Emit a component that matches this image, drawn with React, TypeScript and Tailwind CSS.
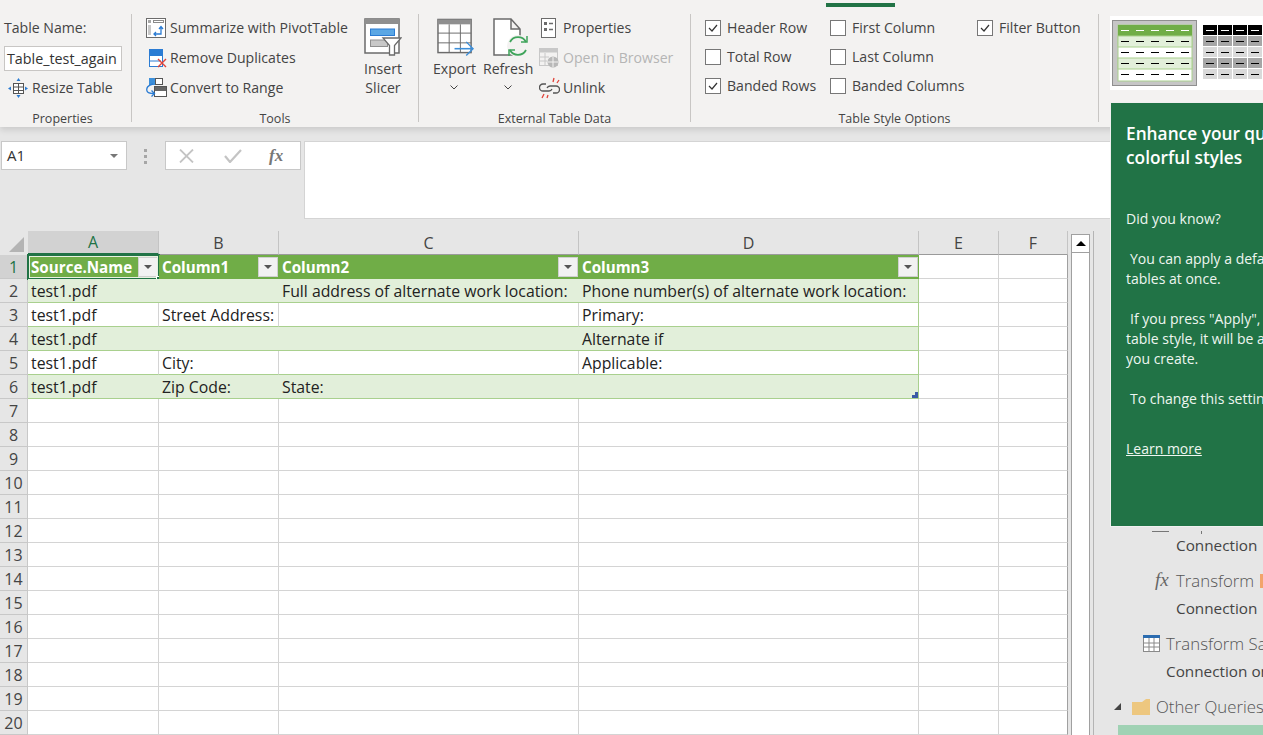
import React from "react";
import clsx from "clsx";

const rows = [
  ["test1.pdf", "", "Full address of alternate work location:", "Phone number(s) of alternate work location:"],
  ["test1.pdf", "Street Address:", "", "Primary:"],
  ["test1.pdf", "", "", "Alternate if"],
  ["test1.pdf", "City:", "", "Applicable:"],
  ["test1.pdf", "Zip Code:", "State:", ""],
];
const headers = ["Source.Name", "Column1", "Column2", "Column3"];
const emptyRows = [7, 8, 9, 10, 11, 12, 13, 14, 15, 16, 17, 18, 19, 20];

const Sep = () => <div className="mt-px h-[108px] w-px shrink-0 bg-[#c8c6c4]" />;

const GroupLabel = ({ children, className }: { children: React.ReactNode; className?: string }) => (
  <div className={clsx("h-[23px] pt-[7px] text-center text-[12.5px] leading-[18px] text-[#444]", className)}>{children}</div>
);

const PivotIcon = () => (
  <svg width="20" height="20" viewBox="0 0 20 20" fill="none">
    <rect x="0.5" y="0.5" width="19" height="19" fill="#fff" stroke="#6b6b6b" />
    <rect x="2" y="2" width="3" height="3" fill="#a6a6a6" />
    <rect x="7.5" y="2.5" width="10" height="2" fill="#fff" stroke="#8a8a8a" />
    <rect x="2" y="7" width="3" height="10" fill="#c8c8c8" />
    <path d="M8 16h7V9M13 11l2-2.5 2 2.5M10 14l-2 2 2 2" stroke="#2b7cd3" strokeWidth="1.3" />
  </svg>
);

const DuplicatesIcon = () => (
  <svg width="20" height="20" viewBox="0 0 20 20" fill="none">
    <rect x="1" y="1" width="14" height="6" fill="#2b7cd3" />
    <rect x="1.5" y="7.5" width="13" height="11" fill="#fff" stroke="#2b7cd3" />
    <path d="M1 13h12" stroke="#2b7cd3" />
    <path d="M10 11l8 8M18 11l-8 8" stroke="#e0433a" strokeWidth="1.4" />
  </svg>
);

const ConvertIcon = () => (
  <svg width="21" height="21" viewBox="0 0 21 21" fill="none">
    <rect x="3.5" y="0.5" width="6" height="6" fill="#3d8fd9" stroke="#3d8fd9" />
    <rect x="9.5" y="0.5" width="7" height="6" fill="#fff" stroke="#555" />
    <rect x="8.5" y="8.5" width="12" height="10" fill="#fff" stroke="#555" />
    <rect x="9" y="9" width="11" height="4" fill="#666" />
    <path d="M7 6C2 7 0 10 1 13c.6 2 3 2.5 7 2.5M5.5 12.5l3 3-3 3" stroke="#2b7cd3" strokeWidth="1.3" />
  </svg>
);

const ResizeIcon = () => (
  <svg width="20" height="20" viewBox="0 0 20 20" fill="none">
    <rect x="5.5" y="5.5" width="10" height="10" fill="#fff" stroke="#555" />
    <path d="M5.5 9h10M5.5 12.5h10M10.5 5.5v10" stroke="#555" />
    <path d="M10.5 0l2 3h-4zM10.5 20l2-3h-4zM0 10.5l3-2v4zM20 10.5l-3-2v4z" fill="#2b7cd3" />
  </svg>
);

const SlicerIcon = () => (
  <svg width="38" height="38" viewBox="0 0 38 38" fill="none">
    <rect x="1" y="1" width="34" height="34" fill="#fff" stroke="#6b6b6b" strokeWidth="1.5" />
    <rect x="1" y="1" width="34" height="5" fill="#8f8f8f" />
    <rect x="6.5" y="11" width="24" height="6.5" fill="#5ba7e4" stroke="#2b7cd3" />
    <rect x="6.5" y="22" width="17" height="6.5" fill="#c8c8c8" stroke="#8f8f8f" />
    <path d="M19 20h18l-6.5 7.5V37H25.5v-9.5z" fill="#fff" stroke="#6b6b6b" strokeWidth="1.3" />
  </svg>
);

const ExportIcon = () => (
  <svg width="39" height="38" viewBox="0 0 39 38" fill="none">
    <rect x="1" y="1" width="34" height="34" fill="#fff" stroke="#6b6b6b" strokeWidth="1.5" />
    <rect x="1" y="1" width="34" height="5" fill="#8f8f8f" />
    <path d="M12.5 6v29M24 6v29M1 15h34M1 25h34" stroke="#6b6b6b" />
    <path d="M18 31h19" stroke="#3d8fd9" strokeWidth="1.6" />
    <path d="M30 24l7 7-7 7" stroke="#3d8fd9" strokeWidth="1.4" />
  </svg>
);

const RefreshIcon = () => (
  <svg width="37" height="40" viewBox="0 0 37 40" fill="none">
    <path d="M1 1h17l9 10v26H1zM18 1v10h9" fill="#fff" stroke="#6b6b6b" strokeWidth="1.5" />
    <circle cx="25" cy="28" r="11" fill="#f3f2f1" />
    <path d="M17 24A9 9 0 0 1 33 24M33 32A9 9 0 0 1 17 32" stroke="#3fa45b" strokeWidth="1.8" />
    <path d="M34 18v6h-6M16 38v-6h6" stroke="#3fa45b" strokeWidth="1.5" />
  </svg>
);

const PropsIcon = () => (
  <svg width="16" height="20" viewBox="0 0 16 20" fill="none">
    <rect x="0.5" y="0.5" width="14" height="19" fill="#fff" stroke="#6b6b6b" />
    <rect x="3" y="4" width="3" height="3" fill="#6b6b6b" />
    <rect x="3" y="10" width="3" height="3" fill="#6b6b6b" />
    <path d="M8 5.5h4M8 11.5h4" stroke="#6b6b6b" strokeWidth="1.5" />
  </svg>
);

const BrowserIcon = () => (
  <svg width="20" height="20" viewBox="0 0 20 20" fill="none">
    <rect x="0.5" y="0.5" width="18" height="17" fill="#f3f2f1" stroke="#c8c8c8" />
    <rect x="0.5" y="0.5" width="18" height="4" fill="#c8c8c8" />
    <path d="M0 9h10M0 13h8M6 5v13" stroke="#c8c8c8" />
    <circle cx="14" cy="14" r="5.5" fill="#b8b8b8" />
    <path d="M9 14h10M14 9v10" stroke="#f3f2f1" />
  </svg>
);

const UnlinkIcon = () => (
  <svg width="21" height="22" viewBox="0 0 21 22" fill="none">
    <path d="M7 7H4a3.5 3.5 0 0 0 0 7h6a3.5 3.5 0 0 0 3-2M14 16h3a3.5 3.5 0 0 0 0-7h-6a3.5 3.5 0 0 0-3 2" stroke="#555" strokeWidth="1.3" />
    <path d="M14 5l1-4M18 6l2-3M5 17l-2 4M9 18l-1 3" stroke="#e0433a" strokeWidth="1.3" />
  </svg>
);

const ToolRow = ({ icon, label, muted }: { icon: React.ReactNode; label: string; muted?: boolean }) => (
  <div className={clsx("flex h-[30px] items-center whitespace-nowrap", muted ? "text-[#b5b5b5]" : "text-[#444]")}>
    <div className="flex w-[24px] shrink-0 items-center">{icon}</div>
    {label}
  </div>
);

const Check = ({ label, on, className }: { label: string; on?: boolean; className?: string }) => (
  <div className={clsx("flex h-[29px] items-center whitespace-nowrap text-[#444]", className)}>
    <div className="mr-[6px] flex h-4 w-4 items-center justify-center border border-[#777] bg-white">
      {on && (
        <svg width="10" height="8" viewBox="0 0 10 8" fill="none">
          <path d="M1 4l3 3 5-6" stroke="#333" strokeWidth="1.2" />
        </svg>
      )}
    </div>
    {label}
  </div>
);

const Chevron = () => (
  <svg width="8" height="5" viewBox="0 0 8 5" fill="none" className="mx-auto mt-[6px]">
    <path d="M0.5 0.5L4 4l3.5-3.5" stroke="#444" />
  </svg>
);

const StyleGallery = () => (
  <svg width="153" height="74" viewBox="0 0 153 74">
    <rect width="153" height="74" fill="#fff" />
    <rect x="2.5" y="4.5" width="84" height="65" fill="#c6c6c6" stroke="#8f8f8f" />
    <rect x="8" y="9" width="74" height="56" fill="#fff" stroke="#a9d08e" />
    <rect x="8" y="9" width="74" height="11" fill="#70ad47" />
    <rect x="8" y="20" width="74" height="11" fill="#e2efda" stroke="#a9d08e" />
    <rect x="8" y="42" width="74" height="11" fill="#e2efda" stroke="#a9d08e" />
    {[14.5, 25.5, 36.5, 47.5, 58.5].map((y, i) => (
      <path key={y} d="M11 0h8M26 0h8M41 0h8M56 0h8M71 0h8" transform={`translate(0 ${y})`} stroke={i === 0 ? "#fff" : "#000"} />
    ))}
    {[0, 1, 2, 3, 4].map((r) => (
      <g key={r} transform={`translate(0 ${9 + r * 11})`}>
        {[93, 108, 123, 138].map((x) => (
          <g key={x}>
            <rect x={x} width="14" height="10" fill={r === 0 ? "#000" : r % 2 ? "#a6a6a6" : "#d9d9d9"} />
            <path d={`M${x + 3} 5.5h8`} stroke={r === 0 ? "#fff" : "#000"} />
          </g>
        ))}
      </g>
    ))}
  </svg>
);

const Ribbon = () => (
  <div className="relative z-10 flex h-[127px] shrink-0 items-start bg-[#f3f2f1] pt-[13px] text-[14.1px] shadow-[0_3px_6px_rgba(0,0,0,0.12)]">
    <div className="absolute left-[826px] top-[3px] h-1 w-[69px] bg-[#217346]" />
    <div className="w-[131px] shrink-0">
      <div className="h-[90px] pl-1 text-[#444]">
        <div className="flex h-[30px] items-center">Table Name:</div>
        <div className="mt-[3px] flex h-[25px] w-[118px] items-center border border-[#c8c6c4] bg-white pl-[2px] text-[14.3px] text-[#333]">Table_test_again</div>
        <div className="mt-[2px] flex h-[30px] items-center pl-1">
          <div className="w-[24px]"><ResizeIcon /></div>
          Resize Table
        </div>
      </div>
      <GroupLabel className="pr-[6px]">Properties</GroupLabel>
    </div>
    <Sep />
    <div className="w-[286px] shrink-0">
      <div className="flex h-[90px] pl-[14px]">
        <div className="w-[209px]">
          <ToolRow icon={<PivotIcon />} label="Summarize with PivotTable" />
          <ToolRow icon={<div className="pl-[2px]"><DuplicatesIcon /></div>} label="Remove Duplicates" />
          <ToolRow icon={<ConvertIcon />} label="Convert to Range" />
        </div>
        <div className="flex w-[56px] flex-col items-center text-center leading-[19px] text-[#444]">
          <div className="mb-[3px] mt-[5px]"><SlicerIcon /></div>
          <div>Insert</div>
          <div>Slicer</div>
        </div>
      </div>
      <GroupLabel>Tools</GroupLabel>
    </div>
    <Sep />
    <div className="w-[271px] shrink-0">
      <div className="flex h-[90px] pl-[14px] text-[#444]">
        <div className="w-[42px] text-center">
          <div className="mb-[3px] mt-[5px] flex justify-center pl-1"><ExportIcon /></div>
          <div className="leading-[20px]">Export</div>
          <Chevron />
        </div>
        <div className="ml-[8px] w-[50px] text-center">
          <div className="mb-[1px] mt-[5px] flex justify-center pl-[6px]"><RefreshIcon /></div>
          <div className="leading-[20px]">Refresh</div>
          <Chevron />
        </div>
        <div className="ml-[6px]">
          <ToolRow icon={<div className="pl-[2px]"><PropsIcon /></div>} label="Properties" />
          <ToolRow icon={<BrowserIcon />} label="Open in Browser" muted />
          <ToolRow icon={<UnlinkIcon />} label="Unlink" />
        </div>
      </div>
      <GroupLabel>External Table Data</GroupLabel>
    </div>
    <Sep />
    <div className="w-[407px] shrink-0">
      <div className="flex h-[90px] pl-[14px]">
        <div className="w-[125px]">
          <Check label="Header Row" on />
          <Check label="Total Row" />
          <Check label="Banded Rows" on />
        </div>
        <div className="w-[147px]">
          <Check label="First Column" />
          <Check label="Last Column" />
          <Check label="Banded Columns" />
        </div>
        <Check label="Filter Button" on />
      </div>
      <GroupLabel>Table Style Options</GroupLabel>
    </div>
    <Sep />
    <div className="ml-[11px] mt-[3px] shrink-0">
      <StyleGallery />
    </div>
  </div>
);

const FormulaBar = () => (
  <div className="flex h-[104px] shrink-0 items-start bg-[#e6e6e6] pt-[14px]">
    <div className="ml-px flex h-[29px] w-[126px] items-center justify-between border border-[#c8c8c8] bg-white pl-[5px] pr-[8px] text-[15px] text-[#333]">
      A1
      <div className="h-0 w-0 border-x-[4px] border-t-[4px] border-x-transparent border-t-[#777]" />
    </div>
    <div className="mr-[2px] flex w-[36px] flex-col items-center gap-[3px] pt-[8px]">
      <div className="h-[3px] w-[3px] bg-[#a6a6a6]" />
      <div className="h-[3px] w-[3px] bg-[#a6a6a6]" />
      <div className="h-[3px] w-[3px] bg-[#a6a6a6]" />
    </div>
    <div className="flex h-[29px] w-[136px] items-center border border-[#c8c8c8] bg-white">
      <svg width="16" height="14" viewBox="0 0 16 14" fill="none" className="ml-[13px]">
        <path d="M1 0.5l13 13M14 0.5l-13 13" stroke="#c4c4c4" strokeWidth="1.8" />
      </svg>
      <svg width="18" height="14" viewBox="0 0 18 14" fill="none" className="ml-[29px]">
        <path d="M1 7l5 6L17 1" stroke="#c4c4c4" strokeWidth="2.2" />
      </svg>
      <span className="ml-[27px] font-['Liberation_Serif',serif] text-[17px] font-bold italic leading-none text-[#777]">fx</span>
    </div>
    <div className="ml-[3px] h-[78px] flex-1 border border-[#d4d4d4] bg-white" />
  </div>
);

const colClass = "flex h-6 items-center justify-center border-r border-[#c4c4c4] text-[16px]";
const rowHead = "flex h-6 items-center justify-center border-r border-b border-[#c8c8c8] bg-[#e6e6e6] text-[16px] text-[#444]";
const blank = "h-6 border-b border-r border-[#d4d4d4]";
const lastBlank = "h-6 border-b border-r border-b-[#d4d4d4] border-r-[#a0a0a0]";

const Sheet = () => (
  <div className="grid w-[1068px] shrink-0 grid-cols-[28px_131px_120px_300px_340px_80px_69px] grid-rows-[24px] bg-white text-[15.8px] text-[#222]">
    <div className="flex h-6 items-end justify-end bg-[#e6e6e6] p-[3px] pr-[4px]">
      <div className="h-0 w-0 border-b-[15px] border-l-[15px] border-b-[#b4b4b4] border-l-transparent" />
    </div>
    <div className={clsx(colClass, "border-b-2 border-b-[#217346] bg-[#d2d2d2] text-[#217346]")}>A</div>
    {["B", "C", "D", "E", "F"].map((c) => (
      <div key={c} className={clsx(colClass, "border-b border-b-[#9a9a9a] bg-[#e6e6e6] text-[#444]")}>{c}</div>
    ))}

    <div className="flex h-6 items-center justify-center border-r border-b border-[#c8c8c8] bg-[#d2d2d2] text-[16px] text-[#217346]">1</div>
    {headers.map((h, i) => (
      <div key={h} className="relative flex h-6 items-center justify-between bg-[#70ad47] pl-[3px] pr-px text-[15.2px] font-bold text-white">
        {h}
        <div className="flex h-5 w-5 items-center justify-center border border-[#d0d0d0] bg-[#f2f2f2]">
          <div className="h-0 w-0 border-x-[4px] border-t-[4px] border-x-transparent border-t-[#555]" />
        </div>
        {i === 0 && (
          <div className="pointer-events-none absolute -inset-px border-2 border-[#217346]">
            <div className="absolute inset-0 border border-[#e8f2e0]" />
            <div className="absolute -bottom-[4px] -right-[4px] h-[6px] w-[6px] border border-white bg-[#217346]" />
          </div>
        )}
      </div>
    ))}
    <div className={blank} />
    <div className={lastBlank} />

    {rows.map((row, r) => {
      const banded = r % 2 === 0;
      return (
        <React.Fragment key={r}>
          <div className={rowHead}>{r + 2}</div>
          {row.map((cell, c) => (
            <div
              key={c}
              className={clsx(
                "relative flex h-6 items-center whitespace-nowrap border-b border-b-[#a9d08e] pl-[3px] pt-[2px]",
                banded ? "bg-[#e2efda]" : "bg-white",
                c === 3 ? "border-r border-r-[#a9d08e]" : banded ? "" : "border-r border-r-[#d4d4d4]",
              )}
            >
              {cell}
              {r === 4 && c === 3 && (
                <div className="absolute bottom-0 right-0 h-[6px] w-[6px] bg-[#3b5aa6] [clip-path:polygon(100%_0,100%_100%,0_100%,0_50%,50%_50%,50%_0)]" />
              )}
            </div>
          ))}
          <div className={blank} />
          <div className={lastBlank} />
        </React.Fragment>
      );
    })}

    {emptyRows.map((n) => (
      <React.Fragment key={n}>
        <div className={rowHead}>{n}</div>
        {[0, 1, 2, 3, 4].map((c) => (
          <div key={c} className={blank} />
        ))}
        <div className={lastBlank} />
      </React.Fragment>
    ))}
  </div>
);

const Scrollbar = () => (
  <div className="flex w-[26px] shrink-0 bg-[#e6e6e6] pl-[3px]">
    <div className="mt-[3px] w-[19px] border-x border-t border-[#a0a0a0] bg-white">
      <div className="flex h-[18px] items-center justify-center border-b border-[#a0a0a0]">
        <div className="h-0 w-0 border-x-[5px] border-b-[5px] border-x-transparent border-b-black" />
      </div>
    </div>
    <div className="ml-[3px] w-px bg-[#b4b4b4]" />
  </div>
);

const QueriesPane = () => (
  <div className="flex min-w-0 flex-1 flex-col overflow-hidden whitespace-nowrap bg-[#e6e6e6] text-[#444]">
    <div className="flex h-[306px] flex-col items-end pr-[1px]">
      <div className="mt-[29px] h-[6px] w-[2px] bg-[#4a5a60]" />
      <div className="mt-[37px] h-[8px] w-[2px] bg-[#b08a50]" />
      <div className="mt-[10px] h-[4px] w-[2px] bg-[#217346]" />
      <div className="mt-[14px] h-[6px] w-[2px] bg-[#b8a070]" />
      <div className="mt-[8px] h-[2px] w-[2px] bg-[#8a8a8a]" />
    </div>
    <div className="ml-[58px] flex h-[4px] items-start">
      <div className="h-[1px] w-[17px] bg-[#777]" />
      <div className="ml-[32px] h-[3px] w-px bg-[#777]" />
    </div>
    <div className="flex h-[21px] items-center pl-[82px] pt-[2px] text-[15.3px] leading-none">Connection</div>
    <div className="mt-[15px] flex h-[21px] items-center pl-[61px] text-[16.8px] font-light text-[#555]">
      <span className="w-[21px] shrink-0 font-['Liberation_Serif',serif] text-[19px] italic text-[#666]">fx</span>
      Transform
      <div className="ml-[6px] h-[14px] w-[4px] shrink-0 bg-[#f2a46b]" />
    </div>
    <div className="mt-[6px] flex h-[21px] items-center pl-[82px] pt-[2px] text-[15.3px] leading-none">Connection</div>
    <div className="mt-[15px] flex h-[21px] items-center pl-[49px] text-[16.8px] font-light text-[#555]">
      <svg width="17" height="17" viewBox="0 0 17 17" fill="none" className="mr-[6px] shrink-0">
        <rect x="0.5" y="0.5" width="16" height="16" fill="#fff" stroke="#8a8a8a" />
        <path d="M0 8h17M0 12h17M6 3v14M11 3v14" stroke="#8a8a8a" />
        <rect width="17" height="3" fill="#2b6cb0" />
      </svg>
      Transform Sample
    </div>
    <div className="mt-[7px] flex h-[21px] items-center pl-[72px] pt-[2px] text-[15.3px] leading-none">Connection only</div>
    <div className="mt-[15px] flex h-[21px] items-center pl-[20px] text-[16.8px] font-light text-[#555]">
      <div className="h-0 w-0 shrink-0 border-b-[7px] border-l-[7px] border-b-[#444] border-l-transparent" />
      <svg width="18" height="16" viewBox="0 0 18 16" className="ml-[11px] mr-[6px] shrink-0">
        <path d="M0 3h10l4-3h4v16H0z" fill="#edc77f" />
      </svg>
      Other Queries
    </div>
    <div className="ml-[24px] mt-[8px] h-[10px] bg-[#a0d2b4]" />
  </div>
);

const TipPopup = () => (
  <div className="absolute left-[1110px] top-[102px] z-20 h-[425px] w-[320px] whitespace-nowrap border border-[#f0f0f0] bg-[#217346] pl-[15px] pt-[19px] text-[14px] leading-[20px] text-[#eef6f0]">
    <div className="text-[17.3px] font-semibold leading-[24px] text-white">
      <div>Enhance your queries</div>
      <div>colorful styles</div>
    </div>
    <p className="mt-[39px]">Did you know?</p>
    <p className="mt-[20px] pl-[4px]">You can apply a default</p>
    <p>tables at once.</p>
    <p className="mt-[20px] pl-[4px]">If you press "Apply", the</p>
    <p>table style, it will be applied</p>
    <p>you create.</p>
    <p className="mt-[20px] pl-[4px]">To change this setting</p>
    <p className="mt-[30px] underline">Learn more</p>
  </div>
);

export default function App() {
  return (
    <div className="relative flex h-[735px] w-[1263px] flex-col overflow-hidden bg-[#e6e6e6] font-['Open_Sans',sans-serif]">
      <Ribbon />
      <FormulaBar />
      <div className="flex h-[504px] items-stretch">
        <Sheet />
        <Scrollbar />
        <QueriesPane />
      </div>
      <TipPopup />
    </div>
  );
}
